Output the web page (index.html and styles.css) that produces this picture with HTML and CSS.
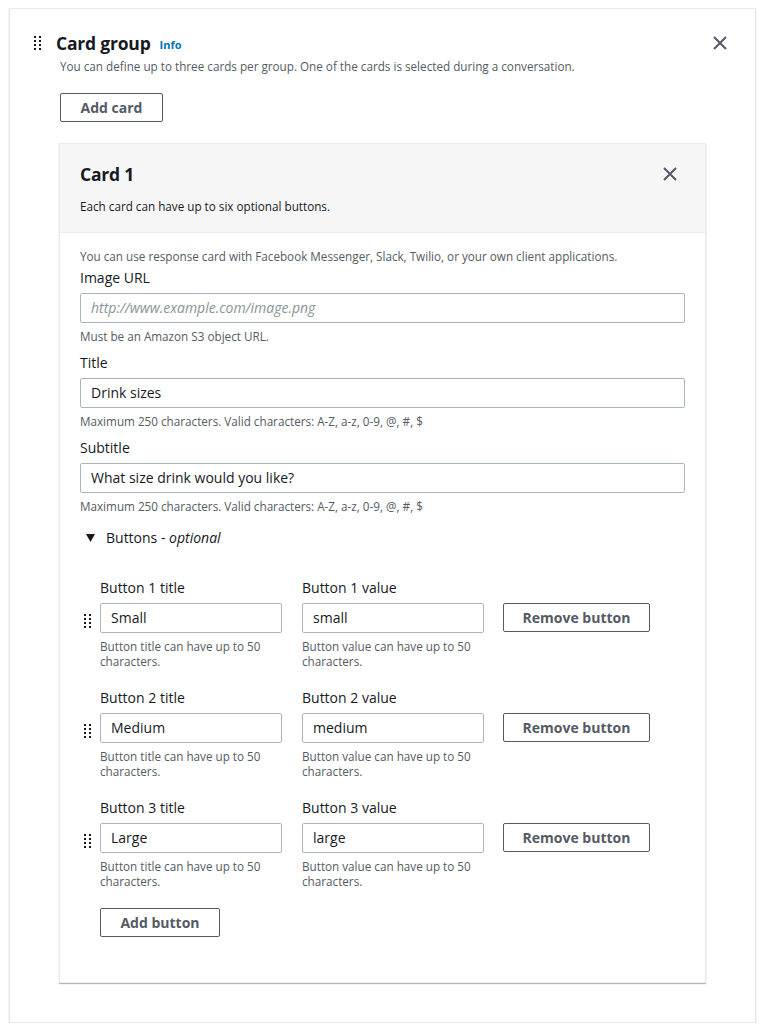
FILE: index.html
```html
<!DOCTYPE html>
<html>
<head>
<meta charset="utf-8">
<link rel="stylesheet" href="styles.css">
</head>
<body>
<div class="outer">
  <div class="group-head">
    <svg class="handle" width="8" height="14" viewBox="0 0 8 14"><g fill="#16191f"><rect x="0" y="0" width="2" height="2"/><rect x="5" y="0" width="2" height="2"/><rect x="0" y="4" width="2" height="2"/><rect x="5" y="4" width="2" height="2"/><rect x="0" y="8" width="2" height="2"/><rect x="5" y="8" width="2" height="2"/><rect x="0" y="12" width="2" height="2"/><rect x="5" y="12" width="2" height="2"/></g></svg>
    <h2 class="group-title">Card group</h2>
    <span class="info">Info</span>
    <svg class="close group-close" width="14" height="14" viewBox="0 0 14 14"><path d="M1 1L13 13M13 1L1 13" stroke="#545b64" stroke-width="2" fill="none"/></svg>
  </div>
  <div class="group-body">
    <p class="group-desc">You can define up to three cards per group. One of the cards is selected during a conversation.</p>
    <button class="btn add-card">Add card</button>
    <div class="card">
      <div class="card-head">
        <div class="card-head-row">
          <h3 class="card-title">Card 1</h3>
          <svg class="close" width="14" height="14" viewBox="0 0 14 14"><path d="M1 1L13 13M13 1L1 13" stroke="#545b64" stroke-width="2" fill="none"/></svg>
        </div>
        <p class="card-sub">Each card can have up to six optional buttons.</p>
      </div>
      <div class="card-body">
        <p class="small intro">You can use response card with Facebook Messenger, Slack, Twilio, or your own client applications.</p>
        <div class="field">
          <label class="label">Image URL</label>
          <div class="input placeholder">http://www.example.com/image.png</div>
          <p class="small hint">Must be an Amazon S3 object URL.</p>
        </div>
        <div class="field">
          <label class="label">Title</label>
          <div class="input">Drink sizes</div>
          <p class="small hint">Maximum 250 characters. Valid characters: A-Z, a-z, 0-9, @, #, $</p>
        </div>
        <div class="field">
          <label class="label">Subtitle</label>
          <div class="input">What size drink would you like?</div>
          <p class="small hint">Maximum 250 characters. Valid characters: A-Z, a-z, 0-9, @, #, $</p>
        </div>
        <div class="toggle">
          <svg class="caret" width="9" height="8" viewBox="0 0 9 8"><path d="M0 0H9L4.5 8Z" fill="#16191f"/></svg>
          <span>Buttons - <em>optional</em></span>
        </div>
        <div class="rows">
          <div class="brow">
            <div class="bhandle"><svg width="7" height="14" viewBox="0 0 7 14"><g fill="#16191f"><rect x="0" y="0" width="2" height="2"/><rect x="5" y="0" width="2" height="2"/><rect x="0" y="4" width="2" height="2"/><rect x="5" y="4" width="2" height="2"/><rect x="0" y="8" width="2" height="2"/><rect x="5" y="8" width="2" height="2"/><rect x="0" y="12" width="2" height="2"/><rect x="5" y="12" width="2" height="2"/></g></svg></div>
            <div class="bfield">
              <label class="label">Button 1 title</label>
              <div class="input">Small</div>
              <p class="small bhint">Button title can have up to 50 characters.</p>
            </div>
            <div class="bfield">
              <label class="label">Button 1 value</label>
              <div class="input">small</div>
              <p class="small bhint">Button value can have up to 50 characters.</p>
            </div>
            <div class="bremove"><button class="btn remove">Remove button</button></div>
          </div>
          <div class="brow">
            <div class="bhandle"><svg width="7" height="14" viewBox="0 0 7 14"><g fill="#16191f"><rect x="0" y="0" width="2" height="2"/><rect x="5" y="0" width="2" height="2"/><rect x="0" y="4" width="2" height="2"/><rect x="5" y="4" width="2" height="2"/><rect x="0" y="8" width="2" height="2"/><rect x="5" y="8" width="2" height="2"/><rect x="0" y="12" width="2" height="2"/><rect x="5" y="12" width="2" height="2"/></g></svg></div>
            <div class="bfield">
              <label class="label">Button 2 title</label>
              <div class="input">Medium</div>
              <p class="small bhint">Button title can have up to 50 characters.</p>
            </div>
            <div class="bfield">
              <label class="label">Button 2 value</label>
              <div class="input">medium</div>
              <p class="small bhint">Button value can have up to 50 characters.</p>
            </div>
            <div class="bremove"><button class="btn remove">Remove button</button></div>
          </div>
          <div class="brow">
            <div class="bhandle"><svg width="7" height="14" viewBox="0 0 7 14"><g fill="#16191f"><rect x="0" y="0" width="2" height="2"/><rect x="5" y="0" width="2" height="2"/><rect x="0" y="4" width="2" height="2"/><rect x="5" y="4" width="2" height="2"/><rect x="0" y="8" width="2" height="2"/><rect x="5" y="8" width="2" height="2"/><rect x="0" y="12" width="2" height="2"/><rect x="5" y="12" width="2" height="2"/></g></svg></div>
            <div class="bfield">
              <label class="label">Button 3 title</label>
              <div class="input">Large</div>
              <p class="small bhint">Button title can have up to 50 characters.</p>
            </div>
            <div class="bfield">
              <label class="label">Button 3 value</label>
              <div class="input">large</div>
              <p class="small bhint">Button value can have up to 50 characters.</p>
            </div>
            <div class="bremove"><button class="btn remove">Remove button</button></div>
          </div>
          <button class="btn add-button">Add button</button>
        </div>
      </div>
    </div>
  </div>
</div>
</body>
</html>
```

FILE: styles.css
```css
* { box-sizing: border-box; }
html, body { margin: 0; padding: 0; background: #fff; }
body {
  font-family: "Open Sans", "Liberation Sans", sans-serif;
  color: #16191f;
  padding: 8px 0 0 9px;
}
p { margin: 0; }
h2, h3 { margin: 0; }

.outer {
  width: 747px;
  height: 1015px;
  border: 1px solid #e6e9e9;
  box-shadow: 0 1px 1px rgba(0, 28, 36, 0.3);
  background: #fff;
}

.group-head {
  display: flex;
  align-items: center;
  height: 24px;
  margin-top: 22px;
  padding-left: 24px;
  padding-right: 28px;
}
.handle { flex: none; }
.group-title {
  font-size: 17.5px;
  font-weight: 700;
  line-height: 24px;
  margin-left: 14px;
  letter-spacing: -0.2px;
}
.info {
  font-size: 11px;
  font-weight: 700;
  color: #0073bb;
  margin-left: 9px;
  margin-top: 3px;
}
.close { flex: none; }
.group-close { margin-left: auto; }

.group-body { padding-left: 49px; }
.group-desc {
  font-size: 11.7px;
  line-height: 16px;
  color: #545b64;
  margin-top: 3px;
  margin-left: 1px;
}

.btn {
  font-family: inherit;
  font-size: 14px;
  font-weight: 700;
  color: #545b64;
  background: #fff;
  border: 1px solid #545b64;
  border-radius: 2px;
  height: 29px;
  padding: 0 20px;
  display: block;
}
.add-card { margin-top: 19px; width: 103px; padding: 0; margin-left: 1px; }

.card {
  margin-top: 21px;
  width: 647px;
  height: 840px;
  border: 1px solid #eaeded;
  box-shadow: 0 1px 1px rgba(0, 28, 36, 0.3);
  background: #fff;
}
.card-head {
  background: #f6f6f6;
  border-bottom: 1px solid #eaeded;
  padding: 18px 28px 18px 20px;
}
.card-head-row {
  display: flex;
  align-items: center;
  justify-content: space-between;
}
.card-title {
  font-size: 17.5px;
  font-weight: 700;
  line-height: 24px;
  letter-spacing: -0.2px;
}
.card-sub {
  font-size: 11.7px;
  line-height: 16px;
  margin-top: 12px;
  color: #16191f;
}

.card-body { padding: 15px 20px 0 20px; }
.small {
  font-size: 11.7px;
  line-height: 16px;
  color: #545b64;
}
.label {
  display: block;
  font-size: 14px;
  line-height: 20px;
  color: #16191f;
}
.field { margin-top: 4px; }
.field + .field { margin-top: 9px; }
.input {
  margin-top: 5px;
  height: 30px;
  border: 1px solid #aab7b8;
  border-radius: 2px;
  padding: 0 10px;
  font-size: 14px;
  line-height: 28px;
  color: #16191f;
  width: 605px;
}
.placeholder { color: #879596; font-style: italic; }
.hint { margin-top: 5px; }

.toggle {
  display: flex;
  align-items: center;
  margin-top: 14px;
  margin-left: 6px;
  font-size: 14px;
  line-height: 20px;
  color: #16191f;
}
.caret { margin-right: 11px; }

.rows { margin-top: 30px; padding-left: 4px; }
.brow {
  display: flex;
  align-items: flex-start;
  margin-bottom: 19px;
}
.bhandle {
  width: 16px;
  padding-top: 33px;
  flex: none;
}
.bfield { width: 182px; margin-right: 20px; flex: none; }
.bfield .input { width: 182px; }
.bhint { margin-top: 6px; line-height: 15px; padding-right: 8px; }
.bremove { padding-top: 25px; }
.remove { width: 147px; padding: 0; margin-left: -1px; }
.add-button { margin-left: 16px; width: 120px; padding: 0; }
```
